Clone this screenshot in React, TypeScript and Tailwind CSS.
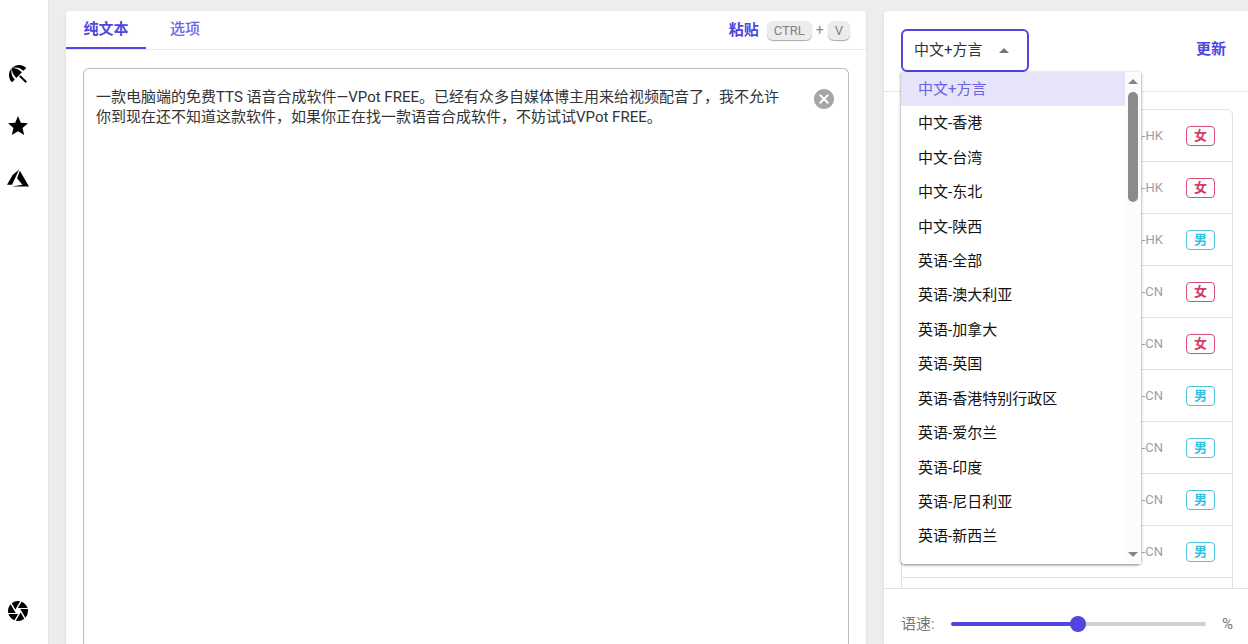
import { useState } from "react";
import type { ReactNode } from "react";
import { clsx } from "clsx";
import { MdBeachAccess, MdCamera, MdCancel, MdStar } from "react-icons/md";

type Gender = "女" | "男";

type Voice = {
  id: number;
  locale: string;
  gender: Gender;
};

const languages = [
  "中文+方言",
  "中文-香港",
  "中文-台湾",
  "中文-东北",
  "中文-陕西",
  "英语-全部",
  "英语-澳大利亚",
  "英语-加拿大",
  "英语-英国",
  "英语-香港特别行政区",
  "英语-爱尔兰",
  "英语-印度",
  "英语-尼日利亚",
  "英语-新西兰",
];

const voices: Voice[] = [
  { id: 1, locale: "zh-HK", gender: "女" },
  { id: 2, locale: "zh-HK", gender: "女" },
  { id: 3, locale: "zh-HK", gender: "男" },
  { id: 4, locale: "zh-CN", gender: "女" },
  { id: 5, locale: "zh-CN", gender: "女" },
  { id: 6, locale: "zh-CN", gender: "男" },
  { id: 7, locale: "zh-CN", gender: "男" },
  { id: 8, locale: "zh-CN", gender: "男" },
  { id: 9, locale: "zh-CN", gender: "男" },
];

const genderClasses: Record<Gender, string> = {
  女: "border-[#d94f7e] text-[#d63a6e]",
  男: "border-[#4cc5e0] text-[#35c0de]",
};

const initialText =
  "一款电脑端的免费TTS 语音合成软件—VPot FREE。已经有众多自媒体博主用来给视频配音了，我不允许你到现在还不知道这款软件，如果你正在找一款语音合成软件，不妨试试VPot FREE。";

export default function App() {
  return (
    <div className="flex h-screen overflow-hidden bg-[#ededed] font-['Roboto','Noto_Sans_CJK_SC',sans-serif] text-[15px] text-[#333]">
      <Sidebar />
      <main className="flex min-w-0 flex-1 gap-[18px] pt-[11px] pl-[17px]">
        <Editor />
        <VoicePanel />
      </main>
    </div>
  );
}

function Sidebar() {
  return (
    <nav className="flex w-[49px] shrink-0 flex-col border-r border-[#e2e2e2] bg-white pt-12 pb-[7px] text-black">
      <SidebarButton label="主题">
        <MdBeachAccess className="size-6" />
      </SidebarButton>
      <SidebarButton label="收藏">
        <MdStar className="size-6" />
      </SidebarButton>
      <SidebarButton label="Azure">
        <AzureIcon className="mx-px size-[22px]" />
      </SidebarButton>
      <div className="mt-auto">
        <SidebarButton label="关于">
          <MdCamera className="size-6" />
        </SidebarButton>
      </div>
    </nav>
  );
}

function SidebarButton({ label, children }: { label: string; children: ReactNode }) {
  return (
    <button type="button" aria-label={label} className="flex h-[52px] w-full items-center pl-[6px]">
      {children}
    </button>
  );
}

function AzureIcon({ className }: { className?: string }) {
  return (
    <svg viewBox="0 0 24 24" className={className} fill="currentColor" aria-hidden="true">
      <path d="M5.483 21.3H24L14.025 4.013l-3.038 8.347 5.836 6.938L5.483 21.3zM13.23 2.7L6.105 8.677 0 19.253h5.505v.014L13.23 2.7z" />
    </svg>
  );
}

function Editor() {
  const [text, setText] = useState(initialText);

  return (
    <section className="flex min-w-0 flex-1 flex-col rounded-t bg-white shadow-sm">
      <header className="flex h-[39px] shrink-0 items-stretch border-b border-[#e8e8e8]">
        <button
          type="button"
          className="w-20 border-b-2 border-[#5046e0] font-bold text-[#5046e0]"
        >
          纯文本
        </button>
        <button type="button" className="w-[78px] border-b-2 border-transparent font-medium text-[#6b62e4]">
          选项
        </button>
        <div className="ml-auto flex items-center gap-1 pr-4">
          <button type="button" className="mr-1 font-bold text-[#5046e0]">
            粘贴
          </button>
          <Key>CTRL</Key>
          <span className="text-sm text-[#8a8a8a]">+</span>
          <Key>V</Key>
        </div>
      </header>
      <div className="flex flex-1 px-[17px] pt-[18px]">
        <div className="flex flex-1 items-start gap-5 rounded-t-md border border-b-0 border-[#bdbdbd] px-3 pt-[18px]">
          <textarea
            aria-label="纯文本"
            value={text}
            onChange={(event) => setText(event.target.value)}
            spellCheck={false}
            className="h-full flex-1 resize-none overflow-hidden leading-5 outline-none"
          />
          <button type="button" aria-label="清空" onClick={() => setText("")} className="text-[#a6a6a6]">
            <MdCancel className="size-6" />
          </button>
        </div>
      </div>
    </section>
  );
}

function Key({ children }: { children: ReactNode }) {
  return (
    <kbd className="rounded-md bg-[#ececec] px-[7px] font-['Roboto',sans-serif] text-[13px] leading-[19px] text-[#808080] shadow-[0_1px_1px_#a8a8a8]">
      {children}
    </kbd>
  );
}

function VoicePanel() {
  const [language, setLanguage] = useState(languages[0]);

  return (
    <aside className="flex w-[364px] shrink-0 flex-col rounded-tl bg-white shadow-sm">
      <header className="flex h-[81px] shrink-0 items-start justify-between border-b border-[#e6e6e6] pt-[18px] pr-[22px] pl-[17px]">
        <div className="relative">
          <select
            aria-label="语言"
            value={language}
            onChange={(event) => setLanguage(event.target.value)}
            className="h-[43px] w-32 appearance-none rounded-md border-2 border-[#5046e0] bg-white px-[11px] outline-none"
          >
            {languages.map((name) => (
              <option key={name}>{name}</option>
            ))}
          </select>
          <Triangle className="pointer-events-none absolute top-[19px] right-5 h-[5px] w-[10px] text-[#757575]" />
          <LanguageMenu selected={language} onSelect={setLanguage} />
        </div>
        <button type="button" className="h-10 font-bold text-[#5046e0]">
          更新
        </button>
      </header>
      <div className="min-h-0 flex-1 overflow-hidden pt-[17px] pr-[15px] pl-[17px]">
        <VoiceTable />
      </div>
      <SpeedSlider />
    </aside>
  );
}

function LanguageMenu({
  selected,
  onSelect,
}: {
  selected: string;
  onSelect: (name: string) => void;
}) {
  return (
    <div className="absolute top-full left-0 z-10 flex h-[492px] w-60 rounded-b bg-white shadow-[0_1px_3px_rgba(0,0,0,0.5)]">
      <ul role="listbox" aria-label="语言列表" className="flex flex-1 flex-col pb-[10px] text-[#111]">
        {languages.map((name) => (
          <li
            key={name}
            role="option"
            aria-selected={name === selected}
            onClick={() => onSelect(name)}
            className={clsx(
              "flex flex-1 cursor-pointer items-center pl-[17px]",
              name === selected && "bg-[#e6e4f8] text-[#6b62e4]",
            )}
          >
            {name}
          </li>
        ))}
      </ul>
      {/* scrollbar */}
      <div className="flex w-4 flex-col items-center bg-[#fcfcfc] py-[7px]" aria-hidden="true">
        <Triangle className="h-[5px] w-[10px] text-[#858585]" />
        <div className="mt-2 h-[110px] w-[10px] rounded-full bg-[#8b8b8b]" />
        <Triangle className="mt-auto h-[5px] w-[10px] rotate-180 text-[#858585]" />
      </div>
    </div>
  );
}

function VoiceTable() {
  return (
    <div className="rounded-t-md border border-[#e0e0e0]">
      <table className="w-full border-separate border-spacing-0">
        <tbody>
          {voices.map((voice) => (
            <tr key={voice.id} className="h-[52px]">
              <td className="border-b border-[#e0e0e0] p-0 text-right text-[13px] text-[#a0a0a0]">
                {voice.locale}
              </td>
              <td className="w-[69px] border-b border-[#e0e0e0] p-0 pr-[17px]">
                <span
                  className={clsx(
                    "ml-auto flex h-5 w-[29px] items-center justify-center rounded border text-[13px] font-bold",
                    genderClasses[voice.gender],
                  )}
                >
                  {voice.gender}
                </span>
              </td>
            </tr>
          ))}
          <tr className="h-[52px]">
            <td colSpan={2} />
          </tr>
        </tbody>
      </table>
    </div>
  );
}

function SpeedSlider() {
  const [speed, setSpeed] = useState(50);

  return (
    <footer className="flex h-14 shrink-0 items-start border-t border-[#e2e2e2] pt-[23px] pr-[15px] pl-[17px] leading-6 text-[#777]">
      <label htmlFor="speed">语速:</label>
      <input
        id="speed"
        type="range"
        min={0}
        max={100}
        value={speed}
        onChange={(event) => setSpeed(Number(event.target.value))}
        className="mx-4 my-1 h-4 min-w-0 flex-1 appearance-none bg-transparent [&::-webkit-slider-runnable-track]:h-1 [&::-webkit-slider-runnable-track]:rounded-full [&::-webkit-slider-runnable-track]:[background:var(--track)] [&::-webkit-slider-thumb]:-mt-[6px] [&::-webkit-slider-thumb]:size-4 [&::-webkit-slider-thumb]:appearance-none [&::-webkit-slider-thumb]:rounded-full [&::-webkit-slider-thumb]:bg-[#5046e0]"
        style={
          {
            "--track": `linear-gradient(to right, #5046e0 ${speed}%, #d0d0d0 ${speed}%)`,
          } as React.CSSProperties
        }
      />
      <span>%</span>
    </footer>
  );
}

function Triangle({ className }: { className?: string }) {
  return (
    <svg viewBox="0 0 10 5" className={className} fill="currentColor" aria-hidden="true">
      <path d="M5 0 10 5H0z" />
    </svg>
  );
}
